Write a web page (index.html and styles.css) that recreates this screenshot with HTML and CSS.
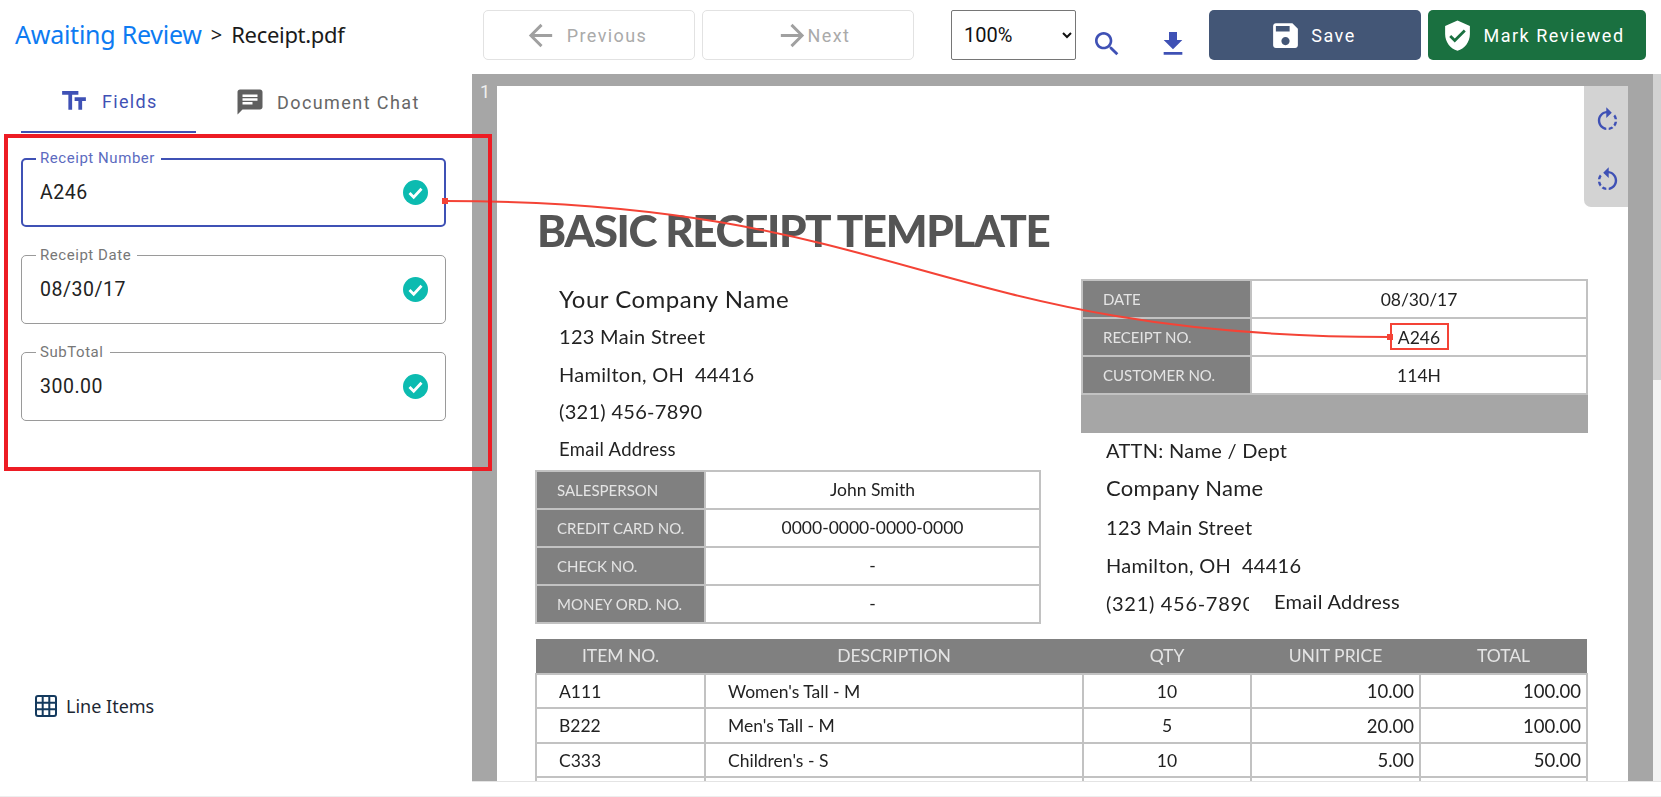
FILE: index.html
```html
<!DOCTYPE html>
<html lang="en">
<head>
<meta charset="utf-8">
<title>Receipt.pdf</title>
<link rel="stylesheet" href="styles.css">
</head>
<body>
<div class="app">
  <header class="topbar">
    <div class="crumbs"><a class="crumb-link">Awaiting Review</a><span class="crumb-sep">&gt;</span><span class="crumb-file">Receipt.pdf</span></div>
    <button class="nav-btn prev"><svg class="ic-nav" viewBox="0 0 24 24"><path d="M20 11H7.83l5.59-5.59L12 4l-8 8 8 8 1.41-1.41L7.83 13H20v-2z"/></svg><span>Previous</span></button>
    <button class="nav-btn next"><svg class="ic-nav" viewBox="0 0 24 24"><path d="m12 4-1.41 1.41L16.17 11H4v2h12.17l-5.58 5.59L12 20l8-8z"/></svg><span>Next</span></button>
    <select class="zoom-select"><option>100%</option></select>
    <svg class="ic32 tool search" viewBox="0 0 24 24"><path d="M15.5 14h-.79l-.28-.27C15.41 12.59 16 11.11 16 9.5 16 5.91 13.09 3 9.5 3S3 5.91 3 9.5 5.91 16 9.5 16c1.61 0 3.09-.59 4.23-1.57l.27.28v.79l5 4.99L20.49 19l-4.99-5zm-6 0C7.01 14 5 11.99 5 9.5S7.01 5 9.5 5 14 7.01 14 9.5 11.99 14 9.5 14z"/></svg>
    <svg class="ic32 tool download" viewBox="0 0 24 24"><path d="M5 20h14v-2H5v2zM19 9h-4V3H9v6H5l7 7 7-7z"/></svg>
    <button class="action save"><svg class="ic-act" viewBox="0 0 24 24"><path d="M17 3H5c-1.11 0-2 .9-2 2v14c0 1.1.89 2 2 2h14c1.1 0 2-.9 2-2V7l-4-4zm-5 16c-1.66 0-3-1.34-3-3s1.34-3 3-3 3 1.34 3 3-1.34 3-3 3zm3-10H5V5h10v4z"/></svg><span>Save</span></button>
    <button class="action review"><svg class="ic-act" viewBox="0 0 24 24"><path d="M12 1 3 5v6c0 5.55 3.84 10.74 9 12 5.16-1.26 9-6.45 9-12V5l-9-4zm-2 16-4-4 1.41-1.41L10 14.17l6.59-6.59L18 9l-8 8z"/></svg><span>Mark Reviewed</span></button>
  </header>

  <main class="workspace">
    <aside class="sidebar">
      <nav class="tabs">
        <div class="tab tab-active"><svg class="ic30" viewBox="0 0 24 24"><path d="M2.5 4v3h5v12h3V7h5V4h-13zm19 5h-9v3h3v7h3v-7h3V9z"/></svg><span>Fields</span></div>
        <div class="tab tab-chat"><svg class="ic30" viewBox="0 0 24 24"><path d="M20 2H4c-1.1 0-1.99.9-1.99 2L2 22l4-4h14c1.1 0 2-.9 2-2V4c0-1.1-.9-2-2-2zM6 9h12v2H6V9zm8 5H6v-2h8v2zm4-6H6V6h12v2z"/></svg><span>Document Chat</span></div>
      </nav>
      <section class="fields">
        <div class="field field-active">
          <span class="field-label">Receipt Number</span>
          <span class="field-value">A246</span>
          <svg class="check" viewBox="0 0 25 25"><circle cx="12.5" cy="12.5" r="12.5"/><path d="m6.5 13 4.2 4.2 7.8-8.4"/></svg>
        </div>
        <div class="field">
          <span class="field-label">Receipt Date</span>
          <span class="field-value">08/30/17</span>
          <svg class="check" viewBox="0 0 25 25"><circle cx="12.5" cy="12.5" r="12.5"/><path d="m6.5 13 4.2 4.2 7.8-8.4"/></svg>
        </div>
        <div class="field">
          <span class="field-label">SubTotal</span>
          <span class="field-value">300.00</span>
          <svg class="check" viewBox="0 0 25 25"><circle cx="12.5" cy="12.5" r="12.5"/><path d="m6.5 13 4.2 4.2 7.8-8.4"/></svg>
        </div>
      </section>
      <div class="line-items">
        <svg class="grid-ic" viewBox="0 0 22 22"><rect x="1" y="1" width="20" height="20" rx="2"/><path d="M7.7 1v20M14.3 1v20M1 7.7h20M1 14.3h20"/></svg>
        <span>Line Items</span>
      </div>
    </aside>

    <section class="viewer">
      <div class="pane">
        <span class="page-num">1</span>
        <article class="page">
          <h1 class="doc-title">BASIC RECEIPT TEMPLATE</h1>
          <div class="doc-columns">
            <div class="doc-left">
              <div class="addr">
                <p class="addr-lead">Your Company Name</p>
                <p>123 Main Street</p>
                <p>Hamilton, OH&nbsp; 44416</p>
                <p>(321) 456-7890</p>
                <p class="addr-small">Email Address</p>
              </div>
              <table class="kv">
                <tr><th>SALESPERSON</th><td>John Smith</td></tr>
                <tr><th>CREDIT CARD NO.</th><td>0000-0000-0000-0000</td></tr>
                <tr><th>CHECK NO.</th><td>-</td></tr>
                <tr><th>MONEY ORD. NO.</th><td>-</td></tr>
              </table>
            </div>
            <div class="doc-right">
              <table class="kv">
                <tr><th>DATE</th><td>08/30/17</td></tr>
                <tr><th>RECEIPT NO.</th><td>A246</td></tr>
                <tr><th>CUSTOMER NO.</th><td>114H</td></tr>
              </table>
              <div class="band"></div>
              <div class="addr addr-right">
                <p>ATTN: Name / Dept</p>
                <p class="addr-mid">Company Name</p>
                <p>123 Main Street</p>
                <p>Hamilton, OH&nbsp; 44416</p>
                <p class="phone-line"><span class="phone">(321) 456-7890</span><span class="email">Email Address</span></p>
              </div>
            </div>
          </div>
          <table class="items">
            <thead>
              <tr><th class="c-item">ITEM NO.</th><th class="c-desc">DESCRIPTION</th><th class="c-qty">QTY</th><th class="c-price">UNIT PRICE</th><th class="c-total">TOTAL</th></tr>
            </thead>
            <tbody>
              <tr><td class="t-item">A111</td><td class="t-desc">Women's Tall - M</td><td class="t-qty">10</td><td class="t-num">10.00</td><td class="t-num">100.00</td></tr>
              <tr><td class="t-item">B222</td><td class="t-desc">Men's Tall - M</td><td class="t-qty">5</td><td class="t-num">20.00</td><td class="t-num">100.00</td></tr>
              <tr><td class="t-item">C333</td><td class="t-desc">Children's - S</td><td class="t-qty">10</td><td class="t-num">5.00</td><td class="t-num">50.00</td></tr>
              <tr><td></td><td></td><td></td><td></td><td></td></tr>
            </tbody>
          </table>
        </article>
        <div class="rotate-panel">
          <svg class="ic-rot" viewBox="0 0 24 24"><path d="M15.55 5.55 11 1v3.07C7.06 4.56 4 7.92 4 12s3.05 7.44 7 7.93v-2.02c-2.84-.48-5-2.94-5-5.91s2.16-5.43 5-5.91V10l4.55-4.45zM19.93 11c-.17-1.39-.72-2.73-1.62-3.89l-1.42 1.42c.54.75.88 1.6 1.02 2.47h2.02zM13 17.9v2.02c1.39-.17 2.74-.71 3.9-1.61l-1.44-1.44c-.75.54-1.59.89-2.46 1.03zm3.89-2.42 1.42 1.41c.9-1.16 1.45-2.5 1.62-3.89h-2.02c-.14.87-.48 1.72-1.02 2.48z"/></svg>
          <svg class="ic-rot" viewBox="0 0 24 24"><path d="M7.11 8.53 5.7 7.11C4.8 8.27 4.24 9.61 4.07 11h2.02c.14-.87.49-1.72 1.02-2.47zM6.09 13H4.07c.17 1.39.72 2.73 1.62 3.89l1.41-1.42c-.52-.75-.87-1.59-1.01-2.47zm1.01 5.32c1.16.9 2.51 1.44 3.9 1.61V17.9c-.87-.15-1.71-.49-2.46-1.03L7.1 18.32zM13 4.07V1L8.45 5.55 13 10V6.09c2.84.48 5 2.94 5 5.91s-2.16 5.43-5 5.91v2.02c3.95-.49 7-3.85 7-7.93s-3.05-7.44-7-7.93z"/></svg>
        </div>
      </div>
      <div class="scrollbar"><div class="scroll-thumb"></div></div>
    </section>
  </main>
  <div class="statusbar"></div>

  <svg class="connector" viewBox="0 0 1661 797" aria-hidden="true">
    <path class="conn-line" d="M445 201C900 201 935 337 1390 337"/>
    <rect class="conn-dot" x="442" y="198" width="6" height="6"/>
    <rect class="conn-dot" x="1387" y="334" width="6" height="6"/>
    <rect class="conn-box" x="1391" y="324" width="57" height="25"/>
  </svg>
  <div class="callout"></div>
</div>
</body>
</html>
```
FILE: styles.css
```css
* { box-sizing: border-box; }
html, body { margin: 0; padding: 0; height: 100%; background: #fff; overflow: hidden; }
body { font-family: Roboto, "Liberation Sans", sans-serif; color: #222; }
p, h1 { margin: 0; }

.app { position: relative; width: 1661px; height: 797px; display: flex; flex-direction: column; }

/* top bar */
.topbar { height: 74px; flex: none; display: flex; align-items: flex-start; padding: 10px 0 0 15px; }
.crumbs { width: 468px; height: 50px; display: flex; align-items: center; font-family: "Noto Sans", sans-serif; padding-bottom: 2px; white-space: nowrap; }
.crumb-link { font-size: 25px; color: #0d7bf2; letter-spacing: -.25px; }
.crumb-sep { font-size: 20px; color: #222; margin: 0 9px; }
.crumb-file { font-size: 22px; color: #1a1a1a; letter-spacing: -.3px; }

.nav-btn { width: 212px; height: 50px; background: #fff; border: 1px solid #e2e2e2; border-radius: 5px; display: flex; align-items: center; justify-content: center; color: #aaa; font: 400 18px Roboto, sans-serif; letter-spacing: 1.4px; padding: 0; }
.nav-btn svg { fill: #a0a0a0; }
.prev { gap: 9px; padding-right: 8px; }
.next { margin-left: 7px; gap: 0; padding-left: 9px; }
.next svg { margin-right: -2px; }
.ic-nav { width: 35px; height: 35px; flex: none; }
.ic32 { width: 32px; height: 32px; flex: none; }
.ic30 { width: 30px; height: 30px; flex: none; }
.ic-act { width: 33px; height: 33px; flex: none; }
.ic-rot { width: 29px; height: 29px; flex: none; }

.zoom-select { width: 125px; height: 50px; margin-left: 37px; background: #fff; border: 1px solid #767676; border-radius: 2px; padding-left: 8px; font: 400 20px Roboto, sans-serif; color: #111; }
.tool { fill: #3f51b5; margin-top: 18px; }
.search { margin-left: 15px; }
.download { margin-left: 34px; }

.action { height: 50px; border: 0; border-radius: 5px; color: #fff; display: flex; align-items: center; justify-content: center; font: 400 18px Roboto, sans-serif; letter-spacing: 1.5px; padding: 0; }
.action svg { fill: #fff; }
.save { width: 212px; margin-left: 20px; background: #435676; gap: 9px; padding-right: 5px; }
.review { width: 218px; margin-left: 7px; background: #1a7040; gap: 9px; padding-right: 8px; }

/* main */
.workspace { flex: none; height: 708px; display: flex; }
.sidebar { width: 472px; flex: none; display: flex; flex-direction: column; }
.tabs { height: 59px; display: flex; padding-left: 21px; }
.tab { display: flex; align-items: center; font-size: 18px; letter-spacing: 1.3px; height: 59px; padding-bottom: 3px; }
.tab-active { width: 175px; padding-left: 38px; gap: 13px; color: #3f51b5; border-bottom: 2px solid #3f51b5; }
.tab-active svg { fill: #3f51b5; }
.tab-chat { margin-left: 39px; gap: 12px; color: #666; letter-spacing: 1.42px; }
.tab-chat svg { fill: #5f5f5f; }

.fields { padding: 25px 0 0 21px; display: flex; flex-direction: column; gap: 28px; }
.field { position: relative; width: 425px; height: 69px; border: 1px solid #9a9a9a; border-radius: 5px; display: flex; align-items: center; justify-content: space-between; padding: 0 17px 0 18px; }
.field-active { border: 2px solid #3f51b5; padding: 0 16px 0 17px; }
.field-label { position: absolute; left: 14px; top: -9px; background: #fff; padding: 0 6px 0 4px; font-size: 15px; line-height: 17px; letter-spacing: .55px; color: #777; white-space: nowrap; }
.field-active .field-label { left: 13px; top: -10px; color: #5c6bc0; }
.field-value { font-size: 19.5px; letter-spacing: .5px; color: #222; }
.check { width: 25px; height: 25px; flex: none; }
.check circle { fill: #0cbbb0; }
.check path { fill: none; stroke: #fff; stroke-width: 2.8; }

.line-items { margin-top: auto; margin-bottom: 64px; padding-left: 35px; display: flex; align-items: center; gap: 9px; font-family: "Noto Sans", sans-serif; font-size: 18px; color: #1c2733; }
.grid-ic { width: 22px; height: 22px; flex: none; fill: #fff; stroke: #143a5e; stroke-width: 2; }

/* viewer */
.viewer { flex: 1; display: flex; min-width: 0; border-bottom: 1px solid #e4e4e4; }
.pane { position: relative; flex: 1; background: #a6a6a6; padding: 12px 25px 0; overflow: hidden; }
.page-num { position: absolute; left: 8px; top: 7px; font-size: 18px; color: #efefef; }
.scrollbar { width: 8px; background: #f3f3f3; }
.scroll-thumb { height: 306px; background: #d2d2d2; }
.rotate-panel { position: absolute; top: 12px; right: 25px; width: 44px; height: 121px; background: #d3d3d3; border-bottom-left-radius: 7px; display: flex; flex-direction: column; align-items: center; gap: 31px; padding: 20px 0 0 2px; }
.rotate-panel svg { fill: #3f51b5; }

.page { background: #fff; height: 900px; padding: 0 40px 0 38px; font-family: Lato, "Open Sans", sans-serif; color: #222; filter: blur(.45px); }
.doc-title { padding: 116px 0 0 2px; height: 193px; font-size: 44px; line-height: 56px; font-weight: 900; color: #555; letter-spacing: -1.4px; white-space: nowrap; }
.doc-columns { display: grid; grid-template-columns: 506px 507px; gap: 40px; }
.addr { font-size: 20px; }
.addr p { height: 37.8px; line-height: 37.8px; padding-left: 24px; letter-spacing: .3px; white-space: nowrap; }
.addr-lead { font-size: 24px; letter-spacing: .5px !important; }
.addr-small { font-size: 18.5px; }
.addr-mid { font-size: 22px; }
.doc-left .addr { margin: 1px 0 1px; }
.addr-right { margin-top: -2px; }
.addr-right p { height: 38.3px; line-height: 38.3px; padding-left: 25px; }
.phone-line { display: flex; }
.phone { width: 143px; flex: none; overflow: hidden; white-space: nowrap; letter-spacing: .7px; }
.email { margin-left: 25px; position: relative; top: -2px; }

.kv { width: 100%; border-collapse: collapse; table-layout: fixed; }
.kv th, .kv td { height: 38px; border: 2px solid #c2c2c2; padding: 0; font-weight: 400; }
.kv th { width: 169px; background: #808080; color: #e4e4e4; text-align: left; padding-left: 20px; font-size: 15px; white-space: nowrap; }
.kv td { text-align: center; color: #222; font-size: 17.5px; }
.band { height: 38px; background: #a6a6a6; }

.items { width: 1053px; border-collapse: collapse; table-layout: fixed; margin-top: 15px; }
.items th { height: 35px; background: #808080; color: #e4e4e4; font-size: 17.5px; font-weight: 400; padding: 0; }
.items td { height: 34.5px; border: 2px solid #c2c2c2; font-size: 17.5px; padding: 0; color: #222; }
.c-item { width: 169px; }
.c-desc { width: 378px; }
.c-qty { width: 168px; }
.c-price { width: 169px; }
.t-item { padding-left: 22px !important; }
.t-desc { padding-left: 22px !important; }
.t-qty { text-align: center; }
.t-num { text-align: right; padding-right: 5px !important; font-size: 18.5px !important; }

.statusbar { flex: 1; border-bottom: 1px solid #eee; }

/* overlays */
.connector { position: absolute; inset: 0; width: 1661px; height: 797px; pointer-events: none; }
.conn-line { fill: none; stroke: #f44336; stroke-width: 2; }
.conn-dot { fill: #f44336; }
.conn-box { fill: none; stroke: #f44336; stroke-width: 2; }
.callout { position: absolute; left: 4px; top: 134px; width: 488px; height: 337px; border: 4.5px solid #ed1c24; pointer-events: none; }
```
